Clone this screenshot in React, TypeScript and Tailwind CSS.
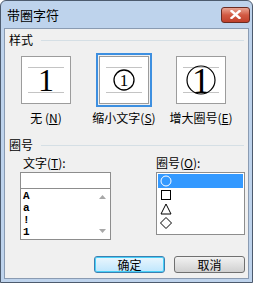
import React from 'react';

const cjk = { fontFamily: '"Noto Sans CJK SC", "Liberation Sans", sans-serif' };

function Preview({ selected, children }: { selected?: boolean; children: React.ReactNode }) {
  return (
    <div className={selected ? 'border-2 border-[#3d8fe0] p-px' : 'p-[3px]'}>
      <div className="relative flex h-[48px] w-[50px] items-center justify-center border border-[#9c9c9c] bg-white">
        <div className="absolute left-[6px] right-[6px] top-[10px] h-px bg-[#c4c4c4]" />
        <div className="absolute left-[6px] right-[6px] top-[35px] h-px bg-[#c4c4c4]" />
        <div className="relative flex">{children}</div>
      </div>
    </div>
  );
}

function SectionTitle({ text }: { text: string }) {
  return (
    <div className="flex items-center gap-[8px] pl-[4px] pr-[4px]">
      <span className="text-[12px] leading-[14px] text-black">{text}</span>
      <div className="h-px flex-1 bg-[#d5dfe5]" />
    </div>
  );
}

export default function App() {
  return (
    <div className="h-[288px] w-[259px] bg-white" style={cjk}>
      <div className="flex h-[283px] w-[253px] flex-col rounded-t-[6px] border border-[#4d5b6e] bg-[#bed3ec]">
        {/* title bar */}
        <div className="flex h-[27px] items-center justify-between pl-[6px] pr-[2px]">
          <span className="text-[13px] text-black">带圈字符</span>
          <div className="flex h-[16px] w-[29px] items-center justify-center rounded-[3px] border border-[#6b2b22] bg-gradient-to-b from-[#e8a493] via-[#d25a43] to-[#c0402b]">
            <svg width="11" height="9" viewBox="0 0 11 9">
              <path d="M1.5 1 L9.5 8 M9.5 1 L1.5 8" stroke="#fff" strokeWidth="2.4" strokeLinecap="square" />
            </svg>
          </div>
        </div>

        {/* client */}
        <div className="mx-[3px] mb-[3px] flex flex-1 flex-col border border-[#8a9bb2] bg-[#f0f0f0] pt-[4px]">
          <SectionTitle text="样式" />

          <div className="mt-[6px] flex items-start pl-[13px]">
            <div className="flex w-[56px] flex-col items-center">
              <Preview>
                <span className="text-[32px] leading-none text-black" style={{ fontFamily: '"Liberation Serif", serif' }}>1</span>
              </Preview>
              <span className="mt-[4px] text-[12px] leading-[14px]">无 (<u>N</u>)</span>
            </div>
            <div className="ml-[20px] flex w-[60px] flex-col items-center">
              <Preview selected>
                <svg width="24" height="24" viewBox="0 0 24 24">
                  <circle cx="12" cy="12" r="10" fill="none" stroke="#000" strokeWidth="1.3" />
                  <text x="12" y="18" textAnchor="middle" fontSize="17" fontFamily="Liberation Serif" fill="#000">1</text>
                </svg>
              </Preview>
              <span className="mt-[4px] whitespace-nowrap text-[12px] leading-[14px]">缩小文字(<u>S</u>)</span>
            </div>
            <div className="ml-[16px] flex w-[62px] flex-col items-center">
              <Preview>
                <svg width="32" height="40" viewBox="0 0 32 40">
                  <circle cx="16" cy="20" r="14" fill="none" stroke="#000" strokeWidth="1.2" />
                  <text x="16" y="33" textAnchor="middle" fontSize="36" fontFamily="Liberation Serif" fill="#000">1</text>
                </svg>
              </Preview>
              <span className="mt-[4px] whitespace-nowrap text-[12px] leading-[14px]">增大圈号(<u>E</u>)</span>
            </div>
          </div>

          <div className="mt-[13px]">
            <SectionTitle text="圈号" />
          </div>

          <div className="mt-[4px] flex justify-between pl-[15px] pr-[3px]">
            <div className="flex flex-col">
              <span className="pl-[3px] text-[12px] leading-[14px]">文字(<u>T</u>):</span>
              <div className="mt-[2px] h-[17px] w-[91px] border border-[#8d8d8d] bg-white" />
              <div className="flex h-[51px] w-[91px] border-x border-b border-[#8d8d8d] bg-white">
                <div className="flex flex-1 flex-col pl-[2px] pt-[1px] text-[11px] font-bold leading-[12px]" style={{ fontFamily: '"Liberation Mono", monospace' }}>
                  <span>A</span>
                  <span>a</span>
                  <span>!</span>
                  <span>1</span>
                </div>
                <div className="flex w-[16px] flex-col items-center justify-between py-[6px]">
                  <svg width="7" height="4" viewBox="0 0 7 4"><path d="M0 4 L3.5 0 L7 4 Z" fill="#a8a8a8" /></svg>
                  <svg width="7" height="4" viewBox="0 0 7 4"><path d="M0 0 L3.5 4 L7 0 Z" fill="#a8a8a8" /></svg>
                </div>
              </div>
            </div>

            <div className="flex flex-col">
              <span className="text-[12px] leading-[14px]">圈号(<u>O</u>):</span>
              <div className="mt-[2px] flex h-[63px] w-[89px] flex-col border border-[#8d8d8d] bg-white p-px">
                <div className="flex h-[14px] items-center bg-[#3399ff] pl-[2px]">
                  <svg width="12" height="12" viewBox="0 0 12 12"><circle cx="6" cy="6" r="5" fill="none" stroke="#fff" strokeWidth="1" /></svg>
                </div>
                <div className="flex h-[14px] items-center pl-[2px]">
                  <svg width="12" height="12" viewBox="0 0 12 12"><rect x="1.5" y="1.5" width="9" height="9" fill="none" stroke="#000" strokeWidth="1" /></svg>
                </div>
                <div className="flex h-[14px] items-center pl-[2px]">
                  <svg width="12" height="12" viewBox="0 0 12 12"><path d="M6 1 L11 11 L1 11 Z" fill="none" stroke="#000" strokeWidth="1" /></svg>
                </div>
                <div className="flex h-[14px] items-center pl-[2px]">
                  <svg width="12" height="12" viewBox="0 0 12 12"><path d="M6 0.5 L11.5 6 L6 11.5 L0.5 6 Z" fill="none" stroke="#000" strokeWidth="1" /></svg>
                </div>
              </div>
            </div>
          </div>

          <div className="mt-auto mb-[5px] flex justify-end gap-[9px] pr-[3px]">
            <div className="flex h-[17px] w-[71px] items-center justify-center rounded-[3px] border border-[#3c7fb1] bg-gradient-to-b from-[#eaf6fd] to-[#bee6fd] text-[12px] shadow-[inset_0_0_0_1px_#48d0f8]">
              确定
            </div>
            <div className="flex h-[17px] w-[71px] items-center justify-center rounded-[3px] border border-[#707070] bg-gradient-to-b from-[#f2f2f2] to-[#d0d0d0] text-[12px]">
              取消
            </div>
          </div>
        </div>
      </div>
    </div>
  );
}
